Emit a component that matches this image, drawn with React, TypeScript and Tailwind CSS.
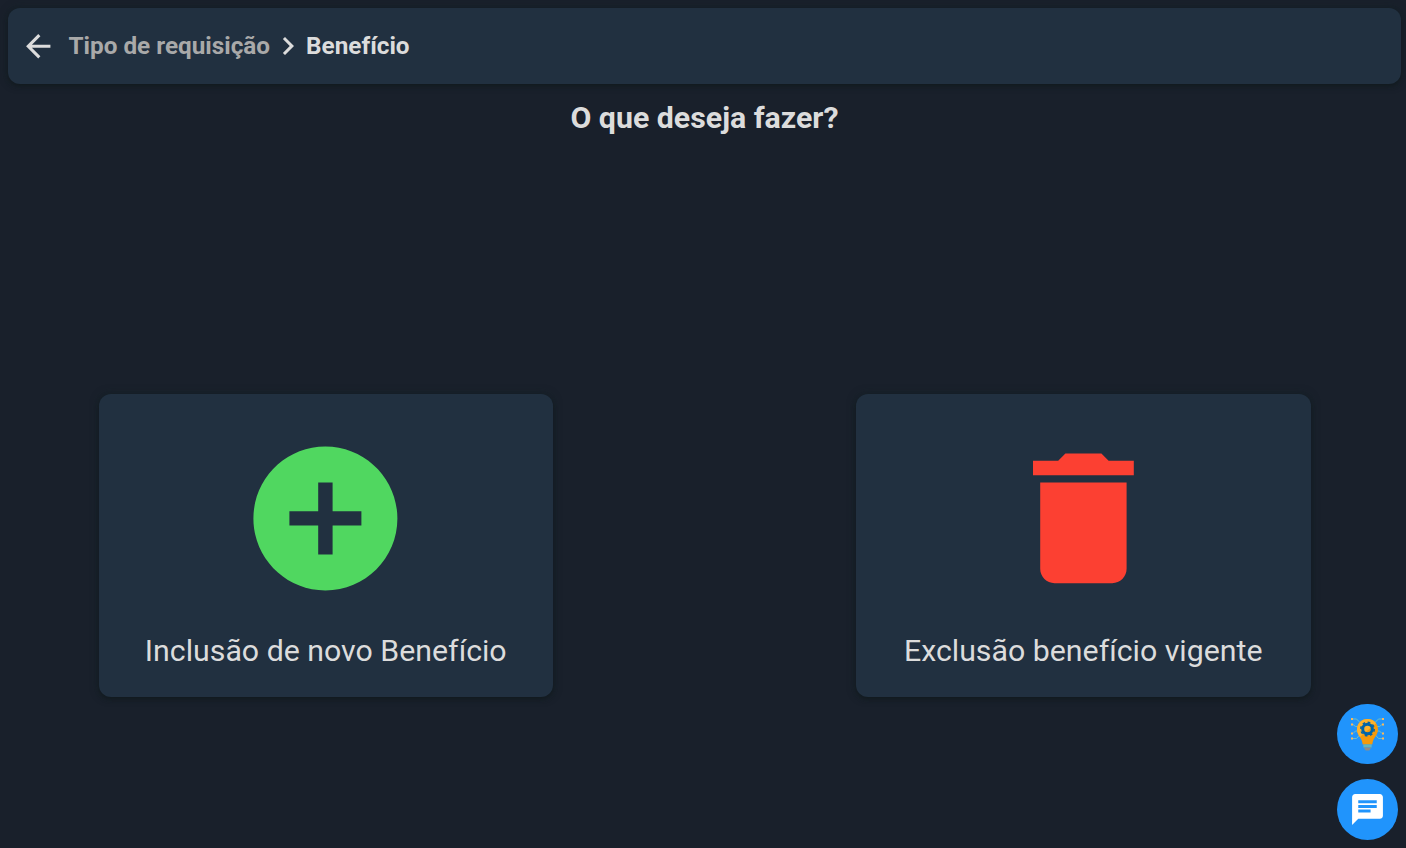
import { ReactNode } from "react";
import {
  MdAddCircle,
  MdArrowBack,
  MdChat,
  MdChevronRight,
  MdDelete,
} from "react-icons/md";

interface OptionCardProps {
  icon: ReactNode;
  label: string;
}

const OptionCard = ({ icon, label }: OptionCardProps) => {
  return (
    <button
      className="flex flex-col items-center h-[303px] w-[454.5px] pt-[37.6px] rounded-xl bg-[#213040]
      shadow-[0_2px_4px_rgba(16,24,28,0.8),0_0_8px_rgba(20,38,40,0.5)] cursor-pointer">
      {icon}
      <span className="mt-[24.6px] text-[30.3px] leading-[44px] whitespace-nowrap">{label}</span>
    </button>
  );
};

const IdeaIcon = () => {
  return (
    <svg viewBox="0 0 36 36" className="w-[36px] h-[36px]" fill="none">
      <g stroke="#6fc0c4" strokeWidth="1">
        <path d="M3 3h3.500L10 6.500M3 8.500l2.500 2H8M8 15H5.500L3 17.500M10 18.500L6.500 22.500H3" />
        <path d="M32 3h-3.500L25 6.500M32 8.500l-2.500 2H27M27 15h2.500l2.500 2.500M25 18.500l3.500 4H32" />
      </g>
      <g fill="#fbb85a">
        <path d="M1 2h2v2H1zM1 7.500h2v2H1zM1 16.500h2v2H1zM1 21.500h2v2H1z" />
        <path d="M32 2h2v2h-2zM32 7.500h2v2h-2zM32 16.500h2v2h-2zM32 21.500h2v2h-2z" />
      </g>
      <path
        d="M17.500 3C11.500 3 7 7.600 7 13.300c0 6.400 4.900 7.700 5.700 15.200h9.600c.8-7.500 5.700-8.800 5.700-15.200C28 7.600 23.500 3 17.500 3z"
        fill="#f59a0c"
      />
      <path
        d="M17.500 3C11.500 3 7 7.600 7 13.300c0 3.300 1.300 5.500 2.900 7.700L26.100 7.200C24.200 4.600 21.100 3 17.500 3z"
        fill="#fcb22e"
      />
      <circle cx="17.500" cy="13" r="4.800" stroke="#0064a8" strokeWidth="3" />
      <circle cx="17.500" cy="13" r="6.700" stroke="#0064a8" strokeWidth="1.600" strokeDasharray="2.630 2.630" />
      <path d="M13.300 28.500h8.400v3h-8.400z" fill="#62b5bd" />
      <path d="M13.700 31.500h7.600l-2 3h-3.600z" fill="#8c8c8c" />
    </svg>
  );
};

const App = () => {
  return (
    <div className="flex flex-col h-screen overflow-hidden bg-[#19202b] pt-2 pl-2 pr-[5px] font-[Roboto,sans-serif] text-[#dcdcdc]">
      <header
        className="flex items-center shrink-0 h-[76px] pl-[12px] rounded-xl bg-[#213040] text-[24.3px] font-bold
        shadow-[0_2px_4px_rgba(16,24,28,0.8),0_0_8px_rgba(20,38,40,0.5)]">
        <button aria-label="Voltar" className="cursor-pointer">
          <MdArrowBack size={36.5} />
        </button>
        <nav className="flex items-center ml-[12px]">
          <span className="text-[#a9a9a9]">Tipo de requisição</span>
          <MdChevronRight size={36} />
          <span>Benefício</span>
        </nav>
      </header>

      <h1 className="mt-[12px] text-center text-[30.3px] leading-[44px] font-bold">
        O que deseja fazer?
      </h1>

      <main className="flex justify-around mt-[254px] -mx-[61px]">
        <OptionCard
          icon={<MdAddCircle size={172.8} className="text-[#50d760]" />}
          label="Inclusão de novo Benefício"
        />
        <OptionCard
          icon={<MdDelete size={172.8} className="text-[#fc4032]" />}
          label="Exclusão benefício vigente"
        />
      </main>

      <div className="fixed right-2 bottom-2 flex flex-col gap-[15px]">
        <button aria-label="Ideias" className="flex items-center justify-center size-[60.6px] rounded-full bg-[#2094fc] cursor-pointer">
          <IdeaIcon />
        </button>
        <button aria-label="Chat" className="flex items-center justify-center size-[60.6px] rounded-full bg-[#2094fc] text-white cursor-pointer">
          <MdChat size={37} />
        </button>
      </div>
    </div>
  );
};

export default App;
